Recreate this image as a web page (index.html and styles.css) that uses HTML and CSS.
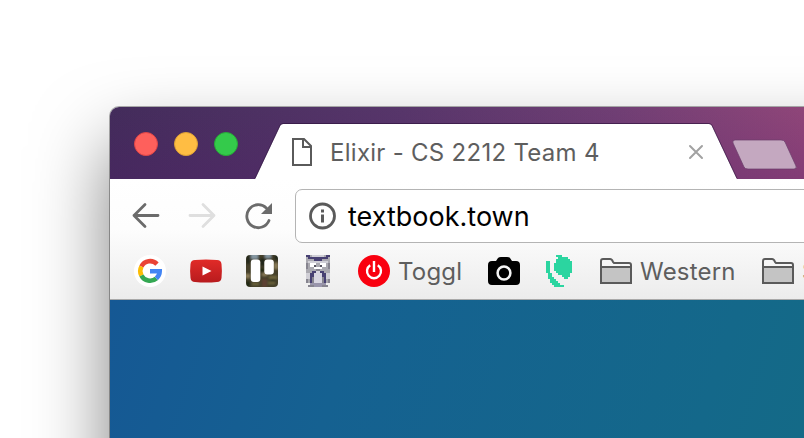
FILE: index.html
```html
<!DOCTYPE html>
<html lang="en">
<head>
<meta charset="utf-8">
<title>Elixir - CS 2212 Team 4</title>
<link rel="stylesheet" href="styles.css">
</head>
<body>
<main class="window">
  <header class="titlebar">
    <div class="lights"><i class="light close"></i><i class="light minimize"></i><i class="light expand"></i></div>
    <div class="tab">
      <svg class="tab-shape" viewBox="0 0 482 56"><path d="M0 56 25 3q1-2 3-2h426q2 0 3 2l25 53z" fill="#fff"/><path d="M0 55.500 25 2.500q1-2 3-2h426q2 0 3 2l25 53" fill="none" stroke="#2e133e" stroke-opacity=".65"/></svg>
      <svg class="page-icon" viewBox="0 0 20 28"><path d="M1 1h11l7 7v19H1zM11 1v8h8" fill="none" stroke="#5a5a5a" stroke-width="2"/></svg>
      <span class="tab-title">Elixir - CS 2212 Team 4</span>
      <svg class="tab-close" viewBox="0 0 14 14"><path d="m1 1 12 12M13 1 1 13" stroke="#a2a2a2" stroke-width="2" stroke-linecap="round"/></svg>
    </div>
    <svg class="new-tab" viewBox="0 0 66 32"><path d="M4 1h46q3 0 4 2l11 24q1 3-2 3H17q-3 0-4-2L2 4Q1 1 4 1z" fill="#c4a8c0" stroke="#6b3d6b" stroke-opacity=".7"/></svg>
  </header>
  <section class="controls">
    <nav class="toolbar">
      <svg class="back" viewBox="0 0 28 28"><path d="M26 13.500H2M13 2.500l-11 11 11 11" class="stroke"/></svg>
      <svg class="forward" viewBox="0 0 28 28"><path d="M2 13.500h24M15 2.500l11 11-11 11" class="stroke"/></svg>
      <svg class="reload" viewBox="0 0 28 28"><path d="M25 18.500A11.500 11.500 0 1 1 22.300 5.900" class="stroke"/><path d="M28 1v11H17z" fill="#6b6b6b"/></svg>
      <div class="address">
        <svg class="info" viewBox="0 0 28 28"><circle cx="13.500" cy="14" r="12" fill="none" stroke="#5a5a5a" stroke-width="2.800"/><path d="M13.500 7.500v3M13.500 12.500v8" stroke="#5a5a5a" stroke-width="3"/></svg>
        <span>textbook.town</span>
      </div>
    </nav>
    <nav class="bookmarks">
      <svg class="mark google" viewBox="0 0 32 32"><circle cx="16" cy="16" r="16" fill="#fff"/><g fill="none" stroke-width="4.600"><path d="M23 9.100A9.700 9.700 0 0 0 7.400 11.500" stroke="#ea4335"/><path d="M7.400 11.500a9.700 9.700 0 0 0 0 9" stroke="#fbbc05"/><path d="M7.400 20.500a9.700 9.700 0 0 0 14.900 3" stroke="#34a853"/><path d="M22.300 23.500a9.700 9.700 0 0 0 3.400-7.200H16" stroke="#4285f4"/></g></svg>
      <svg class="mark youtube" viewBox="0 0 32 32"><defs><linearGradient id="yt" x2="0" y2="1"><stop stop-color="#e12b28"/><stop offset="1" stop-color="#b81b1e"/></linearGradient></defs><path d="M5 5q11-1 22 0 4 0 4.500 4 .8 7 0 14-.5 4-4.500 4-11 1-22 0-4 0-4.500-4-.8-7 0-14Q1 5 5 5z" fill="url(#yt)"/><path d="m12.500 11.500 9 4.500-9 4.500z" fill="#fff"/></svg>
      <svg class="mark trello" viewBox="0 0 32 32"><defs><clipPath id="tc"><rect width="32" height="32" rx="4"/></clipPath><filter id="soft"><feGaussianBlur stdDeviation=".8"/></filter></defs><g clip-path="url(#tc)"><g filter="url(#soft)"><path fill="#443f2c" d="M-4-4h40v40H-4z"/><path fill="#8597a2" d="M5-2h7v6H5zM19-2h6v5h-6z"/><path fill="#24281c" d="M0 0h4v9H0zM14 3h5v8h-5zM28 0h6v5h-6z"/><path fill="#8a7b58" d="M28 8h4v6h-4zM-1 19h5v4h-5zM16 18h5v3h-5z"/><path fill="#71683e" d="M23 21h8v3h-8zM6 28h7v2H6zM22 27h7v2h-7z"/><path fill="#5d4030" d="M16 24h5v8h-5z"/><path fill="#1e2518" d="M0 26h4v6H0zM24 24h5v2h-5zM14 13h4v4h-4z"/></g></g><rect x="4.800" y="4.500" width="9.500" height="22.500" rx="3" fill="#fff"/><rect x="18.300" y="4.500" width="9.500" height="15" rx="3" fill="#fff"/></svg>
      <svg class="mark mascot" viewBox="0 0 16 16" shape-rendering="crispEdges"><path fill="#aaa9b0" d="M2 0h12v5H2zM3 5h10v3H3zM2 7h12v7H2z"/><path fill="#d0cfd6" d="M5 0h6v1H5zM3 3h10v1H3zM2 9h2v3H2zM12 9h2v3h-2z"/><path fill="#474072" d="M2 0h2v1H2zM12 0h2v1h-2zM3 1h10v1H3zM6 2h4v1H6zM5 8h2v1H5zM9 8h2v1H9zM4 9h2v3H4zM10 9h2v3h-2zM4 12h1v2H4zM11 12h1v2h-1z"/><path fill="#fff" d="M4 4h3v2H4zM9 4h3v2H9zM6 6h4v1H6z"/><path fill="#55535e" d="M6 5h1v1H6zM9 5h1v1H9z"/><path fill="#d8d6e1" d="M7 8h2v1H7zM6 9h4v5H6z"/><path fill="#86848f" d="M2 4h1v3H2zM13 4h1v3h-1zM2 12h1v2H2zM13 12h1v2h-1zM3 15h3v1H3zM10 15h3v1h-3zM5 11h1v3H5zM10 11h1v3h-1zM7 7h2v1H7z"/><path fill="#9995ab" d="M4 14h8v1H4zM6 15h4v1H6z"/></svg>
      <a class="link toggl"><svg class="mark" viewBox="0 0 32 32"><circle cx="16" cy="16" r="16" fill="#f9000f"/><path d="M12.200 10.300a7 7 0 1 0 7.600 0M16 6v11" fill="none" stroke="#fff" stroke-width="2.400"/></svg><span>Toggl</span></a>
      <svg class="mark camera" viewBox="0 0 32 32"><path d="M4 6h4l2-3q1-1 3-1h6q2 0 3 1l2 3h4q4 0 4 4v16q0 4-4 4H4q-4 0-4-4V10q0-4 4-4z"/><circle cx="16" cy="18" r="6.400" fill="none" stroke="#f4f4f4" stroke-width="2.500"/></svg>
      <svg class="mark leaf" viewBox="0 0 16 16" shape-rendering="crispEdges"><path fill="#2bd5a0" d="M6 0h3v1h3v1h1v1h1v6h-1v2h-1v1h-2v-1H9v-1H7V9H6V8H5V4h1V2h1V1H6zM1 3h2v6h1v2h1v1h1v1h1v1h1v1h2v1H5v-1H4v-1H3v-2H2V9H1z"/></svg>
      <a class="link western"><svg class="folder" viewBox="0 0 32 26"><path d="M1 25V3q0-2 2-2h7q2 0 3 3l1 1h15q2 0 2 2v18z" fill="#f6f6f6"/><path d="M1 9h30v16H1z" fill="#c4c4c4"/><path d="M1 25V3q0-2 2-2h7q2 0 3 3l1 1h15q2 0 2 2v18zM1 9h30" fill="none" stroke="#5a5a5a" stroke-width="2"/></svg><span>Western</span></a>
      <a class="link"><svg class="folder" viewBox="0 0 32 26"><path d="M1 25V3q0-2 2-2h7q2 0 3 3l1 1h15q2 0 2 2v18z" fill="#f6f6f6"/><path d="M1 9h30v16H1z" fill="#c4c4c4"/><path d="M1 25V3q0-2 2-2h7q2 0 3 3l1 1h15q2 0 2 2v18zM1 9h30" fill="none" stroke="#5a5a5a" stroke-width="2"/></svg><span>S</span></a>
    </nav>
  </section>
  <section class="content"></section>
</main>
</body>
</html>
```
FILE: styles.css
```css
* { box-sizing: border-box; }
html, body { height: 100%; }
body { margin: 0; padding: 107px 0 0 110px; overflow: hidden; background: #fff; font-family: Inter, "Liberation Sans", sans-serif; }
svg { display: block; flex: none; overflow: visible; }
.window { width: 1400px; height: 900px; border-radius: 9px; box-shadow: 0 0 0 1px rgba(0, 0, 0, .3), 0 38px 74px rgba(0, 0, 0, .5); }
.titlebar { height: 72px; display: flex; border-radius: 9px 9px 0 0; background: linear-gradient(to bottom, transparent, rgba(80, 22, 105, .22)), linear-gradient(100deg, #432c5b 0, #57366a 290px, #703f74 500px, #904679 690px, #984a7c 1000px); }
.lights { display: flex; gap: 16px; padding: 25px 0 0 24px; width: 145px; flex: none; }
.light { width: 24px; height: 24px; border-radius: 50%; border: 1px solid; }
.close { background: #fe605c; border-color: #df4546; }
.minimize { background: #ffbd43; border-color: #dea034; }
.expand { background: #34ca4b; border-color: #27aa37; }
.tab { position: relative; display: flex; align-items: center; width: 482px; height: 56px; margin-top: 16px; flex: none; padding: 2px 34px 0 37px; }
.tab-shape { position: absolute; inset: 0; width: 482px; height: 56px; }
.page-icon { position: relative; width: 20px; height: 28px; }
.tab-title { position: relative; margin-left: 18px; font-size: 24px; letter-spacing: .28px; color: #5e5e5e; white-space: nowrap; }
.tab-close { position: relative; width: 14px; height: 14px; margin-left: auto; }
.new-tab { width: 66px; height: 32px; margin: 32px 0 0 -6px; }
.controls { height: 121px; border-bottom: 1px solid #a9a9a9; background: linear-gradient(#fff 0, #fdfdfd 50px, #ececec 120px); }
.toolbar { display: flex; align-items: center; height: 64px; padding: 10px 0 0 22px; }
.toolbar svg { width: 28px; height: 28px; }
.stroke { fill: none; stroke: #6b6b6b; stroke-width: 2.8; stroke-linecap: round; stroke-linejoin: round; }
.forward { margin-left: 28px; }
.forward .stroke { stroke: #dfdfdf; }
.reload { margin-left: 28px; }
.address { display: flex; align-items: center; margin-left: 23px; width: 1000px; height: 54px; border: 1px solid #b4b4b4; border-radius: 7px; background: #fff; padding-left: 13px; font-size: 27px; color: #000; }
.address span { margin-left: 11px; letter-spacing: 0; }
.bookmarks { display: flex; align-items: center; height: 56px; padding-left: 24px; color: #5e5e5e; font-size: 24px; }
.mark { width: 32px; height: 32px; }
.youtube, .trello, .mascot { margin-left: 24px; }
.toggl { margin-left: 24px; width: 106px; }
.link { display: flex; align-items: center; flex: none; white-space: nowrap; }
.link span { margin-left: 8px; letter-spacing: .2px; }
.camera { margin-left: 24px; }
.leaf { margin-left: 24px; }
.western { margin-left: 24px; width: 162px; }
.folder { width: 32px; height: 26px; }
.content { height: 707px; background: linear-gradient(108deg, #155894 0, #156191 240px, #14688a 600px, #146c84 800px, #148078 1400px); border-radius: 0 0 9px 9px; }
```
